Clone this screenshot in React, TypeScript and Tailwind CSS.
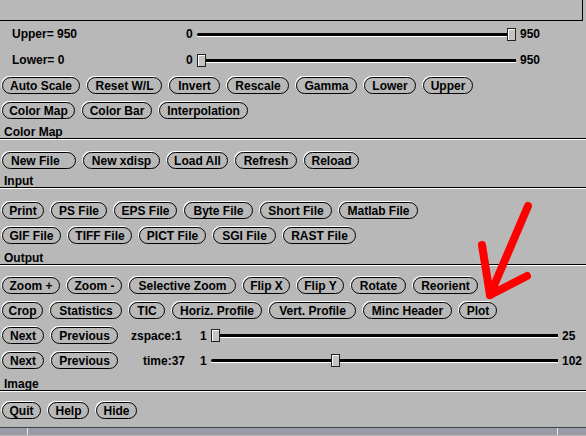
import React from 'react'

type B = { label: string; w: string; left?: boolean }

const rows: Record<string, B[]> = {
  scale: [
    { label: 'Auto Scale', w: 'w-[78px]' },
    { label: 'Reset W/L', w: 'w-[75px]' },
    { label: 'Invert', w: 'w-[51px]' },
    { label: 'Rescale', w: 'w-[62px]' },
    { label: 'Gamma', w: 'w-[61px]' },
    { label: 'Lower', w: 'w-[52px]' },
    { label: 'Upper', w: 'w-[50px]' },
  ],
  color: [
    { label: 'Color Map', w: 'w-[73px]' },
    { label: 'Color Bar', w: 'w-[70px]' },
    { label: 'Interpolation', w: 'w-[89px]' },
  ],
  input: [
    { label: 'New File', w: 'w-[74px]', left: true },
    { label: 'New xdisp', w: 'w-[77px]' },
    { label: 'Load All', w: 'w-[61px]' },
    { label: 'Refresh', w: 'w-[62px]' },
    { label: 'Reload', w: 'w-[55px]' },
  ],
  out1: [
    { label: 'Print', w: 'w-[42px]' },
    { label: 'PS File', w: 'w-[56px]' },
    { label: 'EPS File', w: 'w-[63px]' },
    { label: 'Byte File', w: 'w-[69px]' },
    { label: 'Short File', w: 'w-[72px]' },
    { label: 'Matlab File', w: 'w-[79px]' },
  ],
  out2: [
    { label: 'GIF File', w: 'w-[59px]' },
    { label: 'TIFF File', w: 'w-[64px]' },
    { label: 'PICT File', w: 'w-[67px]' },
    { label: 'SGI File', w: 'w-[63px]' },
    { label: 'RAST File', w: 'w-[73px]' },
  ],
  img1: [
    { label: 'Zoom +', w: 'w-[58px]' },
    { label: 'Zoom -', w: 'w-[55px]' },
    { label: 'Selective Zoom', w: 'w-[107px]' },
    { label: 'Flip X', w: 'w-[47px]' },
    { label: 'Flip Y', w: 'w-[47px]' },
    { label: 'Rotate', w: 'w-[55px]' },
    { label: 'Reorient', w: 'w-[65px]' },
  ],
  img2: [
    { label: 'Crop', w: 'w-[41px]' },
    { label: 'Statistics', w: 'w-[72px]' },
    { label: 'TIC', w: 'w-[36px]' },
    { label: 'Horiz. Profile', w: 'w-[90px]' },
    { label: 'Vert. Profile', w: 'w-[87px]' },
    { label: 'Minc Header', w: 'w-[89px]' },
    { label: 'Plot', w: 'w-[38px]' },
  ],
  main: [
    { label: 'Quit', w: 'w-[39px]' },
    { label: 'Help', w: 'w-[41px]' },
    { label: 'Hide', w: 'w-[41px]' },
  ],
}

function Btn({ label, w, left }: B) {
  return (
    <button
      className={`${w} h-[17px] shrink-0 rounded-full border border-black shadow-[-1px_-1px_0_#fff] flex items-center ${left ? 'justify-start pl-[8px]' : 'justify-center'} text-[12px] font-bold leading-none text-black whitespace-nowrap`}
    >
      {label}
    </button>
  )
}

function ButtonRow({ items, children }: { items: B[]; children?: React.ReactNode }) {
  return (
    <div className="h-[25px] flex items-center gap-[7px] pl-[2px]">
      {items.map(b => <Btn key={b.label} {...b} />)}
      {children}
    </div>
  )
}

function Label({ text, h }: { text: string; h: string }) {
  return (
    <div className="h-[25px]">
      <div className={`${h} flex items-end pl-[4px] border-b border-black shadow-[0_1px_0_#fff] text-[12px] font-bold leading-none`}>
        {text}
      </div>
    </div>
  )
}

// track with the thumb drawn over it
function Track({ width, value, min, max }: { width: number; value: number; min: number; max: number }) {
  const left = ((value - min) / (max - min)) * (width - 9)
  return (
    <div className="relative h-[13px] shrink-0" style={{ width }}>
      <div className="absolute left-0 right-0 top-[5px] h-[3px] bg-black rounded-l-full shadow-[0_1px_0_#fff]" />
      <div
        className="absolute top-0 w-[9px] h-[13px] border border-[#222] bg-[#c4c4c4] shadow-[inset_1px_1px_0_#fff]"
        style={{ left }}
      />
    </div>
  )
}

function WLRow({ text, value }: { text: string; value: number }) {
  return (
    <div className="h-[26px] flex items-center pl-[12px] text-[12px] font-bold leading-none">
      <span className="w-[174px] shrink-0">{text}</span>
      <span className="w-[11px] shrink-0">0</span>
      <Track width={319} value={value} min={0} max={950} />
      <span className="ml-[4px]">950</span>
    </div>
  )
}

function DimSlider({ text, pad, value, max }: { text: string; pad: string; value: number; max: number }) {
  return (
    <div className="flex items-center text-[12px] font-bold leading-none">
      <span className={`w-[73px] shrink-0 ${pad}`}>{text}</span>
      <span className="w-[13px] shrink-0 pl-[2px]">1</span>
      <Track width={347} value={value} min={1} max={max} />
      <span className="ml-[4px]">{max}</span>
    </div>
  )
}

const nav: B[] = [
  { label: 'Next', w: 'w-[42px]' },
  { label: 'Previous', w: 'w-[67px]' },
]

export default function App() {
  return (
    <div className="relative w-[586px] h-[436px] overflow-hidden bg-[#b8b8b8] text-black font-['Liberation_Sans',Arial,sans-serif]">
      <div className="h-[21px] w-[583px] border-b border-r border-black" />

      <WLRow text="Upper= 950" value={950} />
      <WLRow text="Lower= 0" value={0} />

      <ButtonRow items={rows.scale} />
      <ButtonRow items={rows.color} />
      <Label text="Color Map" h="h-[16px]" />

      <ButtonRow items={rows.input} />
      <Label text="Input" h="h-[15px]" />

      <ButtonRow items={rows.out1} />
      <ButtonRow items={rows.out2} />
      <Label text="Output" h="h-[17px]" />

      <ButtonRow items={rows.img1} />
      <ButtonRow items={rows.img2} />
      <ButtonRow items={nav}>
        <DimSlider text="zspace:1" pad="pl-[6px]" value={1} max={25} />
      </ButtonRow>
      <ButtonRow items={nav}>
        <DimSlider text="time:37" pad="pl-[18px]" value={37} max={102} />
      </ButtonRow>
      <Label text="Image" h="h-[18px]" />

      <ButtonRow items={rows.main} />

      <div className="h-[4px]" />
      <div className="h-[8px] flex border-t border-[#3c4646] bg-[#9a9aa8]">
        <div className="w-[28px] border-r border-[#e8e8e8]" />
        <div className="flex-1 border-r border-[#e8e8e8]" />
        <div className="w-[28px]" />
      </div>

      {/* annotation arrow pointing at Plot */}
      <svg className="absolute left-0 top-0 pointer-events-none" width="586" height="436" viewBox="0 0 586 436">
        <g stroke="#ff0000" strokeWidth="8" strokeLinecap="round" strokeLinejoin="round" fill="none">
          <line x1="528" y1="206" x2="490" y2="295" />
          <polyline points="482,245 490,295 527,276" />
        </g>
      </svg>
    </div>
  )
}
